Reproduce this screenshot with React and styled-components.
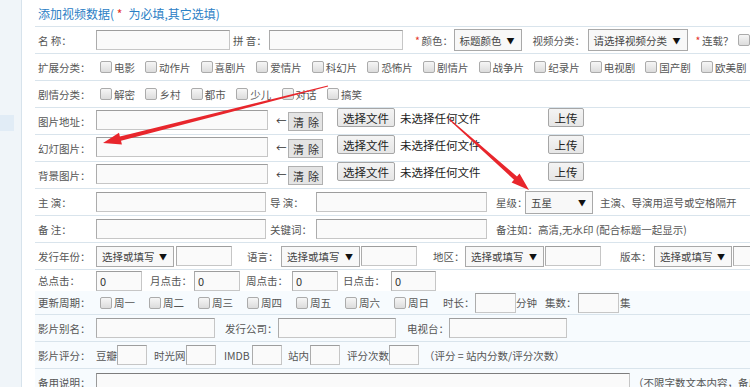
import React from "react";
import styled, { createGlobalStyle } from "styled-components";

const GlobalStyle = createGlobalStyle`
  html, body {
    margin: 0;
    padding: 0;
    background: #fff;
  }
  body {
    width: 750px;
    height: 387px;
    overflow: hidden;
    font-family: "Noto Sans CJK SC", "Noto Sans", sans-serif;
    font-size: 10.5px;
    color: #555;
  }
  * {
    box-sizing: border-box;
  }
`;

const Page = styled.div`
  position: relative;
  display: flex;
  width: 750px;
  height: 387px;
  overflow: hidden;
`;

const Sidebar = styled.aside`
  width: 22px;
  flex-shrink: 0;
  background: #f0f5f9;
  border-right: 1px solid #d7e3ec;
  padding-top: 115px;
`;

const MenuMark = styled.div`
  width: 14px;
  height: 16px;
  background: #e1ecf6;
`;

const Gutter = styled.div`
  width: 13px;
  flex-shrink: 0;
`;

const Form = styled.main`
  flex: 1;
  display: flex;
  flex-direction: column;
  min-width: 0;
`;

const Row = styled.div`
  display: flex;
  align-items: ${(p) => p.$align || "center"};
  height: ${(p) => p.$h || 27}px;
  flex-shrink: 0;
  padding-left: 3px;
  border-bottom: ${(p) => (p.$noLine ? "none" : "1px solid #d9e4ec")};
  background: ${(p) => (p.$tint ? "#f7fbfe" : "#fff")};
  white-space: nowrap;
`;

const Title = styled.h1`
  margin: 0;
  font-size: 12px;
  font-weight: normal;
  color: #2b80c5;
`;

const Star = styled.span`
  color: #e5332a;
  display: inline-block;
  width: ${(p) => p.$w || 9}px;
  margin-left: ${(p) => p.$ml || 0}px;
`;

const Label = styled.label`
  width: 58px;
  flex-shrink: 0;
  align-self: center;
  color: #555;
`;

const Text = styled.span`
  display: inline-block;
  flex-shrink: 0;
  margin-left: ${(p) => p.$ml || 0}px;
  width: ${(p) => (p.$w ? `${p.$w}px` : "auto")};
  align-self: ${(p) => p.$self || "auto"};
  margin-top: ${(p) => p.$mt || 0}px;
  color: ${(p) => p.$color || "#555"};
  font-size: ${(p) => p.$fs || 10.5}px;
`;

const Input = styled.input`
  flex-shrink: 0;
  width: ${(p) => p.$w}px;
  height: ${(p) => p.$h || 20}px;
  margin: ${(p) => p.$mt || 0}px 0 0 ${(p) => p.$ml || 0}px;
  padding: 0 3px;
  border: 1px solid #c6c6c6;
  border-top-color: #9d9d9d;
  border-left-color: #acacac;
  background: #fafafa;
  font-family: inherit;
  font-size: 11px;
  color: #333;
  outline: none;
`;

const TextArea = styled.textarea`
  flex-shrink: 0;
  width: ${(p) => p.$w}px;
  height: 40px;
  margin: ${(p) => p.$mt || 0}px 0 0 0;
  border: 1px solid #c6c6c6;
  border-top-color: #7d7d7d;
  border-left-color: #9a9a9a;
  background: #fafafa;
  resize: none;
`;

const Select = styled.div`
  flex-shrink: 0;
  display: flex;
  align-items: center;
  justify-content: space-between;
  width: ${(p) => p.$w}px;
  height: ${(p) => p.$h || 21}px;
  margin-left: ${(p) => p.$ml || 0}px;
  padding: 0 6px 0 5px;
  border: 1px solid #a9a9a9;
  background: #f8f8f8;
  color: #444;
  font-size: 10.5px;
`;

const Caret = styled.span`
  margin-left: 4px;
  font-size: 8px;
  color: #111;
`;

const CheckGroup = styled.div`
  display: flex;
  align-items: center;
  padding-left: 4px;
`;

const CheckItem = styled.span`
  display: inline-flex;
  align-items: center;
  flex-shrink: 0;
  width: ${(p) => (p.$w ? `${p.$w}px` : "auto")};
  gap: 2px;
`;

const Box = styled.span`
  display: inline-block;
  width: 12px;
  height: 12px;
  flex-shrink: 0;
  border: 1px solid #ababab;
  border-radius: 2px;
  background: linear-gradient(#f6f6f6, #dcdcdc);
`;

const ClearButton = styled.button`
  flex-shrink: 0;
  width: 35px;
  height: 19px;
  margin-top: ${(p) => p.$mt || 0}px;
  padding: 0;
  border: 1px solid #b0b0b0;
  background: #e4e4e4;
  font-family: inherit;
  font-size: 11px;
  letter-spacing: 4px;
  text-indent: 4px;
  color: #333;
`;

const FileButton = styled.button`
  flex-shrink: 0;
  width: ${(p) => p.$w}px;
  height: 19px;
  margin-left: ${(p) => p.$ml || 0}px;
  padding: 0;
  border: 1px solid #a6a6a6;
  border-radius: 2px;
  background: linear-gradient(#f4f4f4, #e6e6e6);
  font-family: inherit;
  font-size: 11.5px;
  color: #222;
`;

const FileBox = styled.div`
  display: flex;
  align-items: center;
  height: 19px;
  flex-shrink: 0;
`;

const Overlay = styled.svg`
  position: absolute;
  left: 0;
  top: 0;
  width: 750px;
  height: 387px;
  pointer-events: none;
`;

function arrowPoints([x1, y1], [x2, y2], tail = 1, shaft = 4.5, headLen = 18, headW = 12) {
  const dx = x2 - x1;
  const dy = y2 - y1;
  const len = Math.hypot(dx, dy);
  const ux = dx / len;
  const uy = dy / len;
  const nx = -uy;
  const ny = ux;
  const bx = x2 - ux * headLen;
  const by = y2 - uy * headLen;
  const pts = [
    [x1 + (nx * tail) / 2, y1 + (ny * tail) / 2],
    [bx + (nx * shaft) / 2, by + (ny * shaft) / 2],
    [bx + (nx * headW) / 2, by + (ny * headW) / 2],
    [x2, y2],
    [bx - (nx * headW) / 2, by - (ny * headW) / 2],
    [bx - (nx * shaft) / 2, by - (ny * shaft) / 2],
    [x1 - (nx * tail) / 2, y1 - (ny * tail) / 2],
  ];
  return pts.map((p) => p.map((v) => v.toFixed(1)).join(",")).join(" ");
}

const extTypes = ["电影", "动作片", "喜剧片", "爱情片", "科幻片", "恐怖片", "剧情片", "战争片", "纪录片", "电视剧", "国产剧", "欧美剧"];
const plotTypes = ["解密", "乡村", "都市", "少儿", "对话", "搞笑"];
const weekDays = ["周一", "周二", "周三", "周四", "周五", "周六", "周日"];

function Checks({ items, w }) {
  return (
    <CheckGroup>
      {items.map((t) => (
        <CheckItem key={t} $w={w ? w : t.length > 2 ? 55.6 : 45}>
          <Box />
          {t}
        </CheckItem>
      ))}
    </CheckGroup>
  );
}

function PicRow({ label }) {
  return (
    <Row $align="flex-start">
      <Label>{label}</Label>
      <Input $w={172} $mt={2} />
      <Text $ml={8} $w={12} $mt={5} $color="#333">←</Text>
      <ClearButton $mt={4}>清除</ClearButton>
      <FileBox>
        <FileButton $w={58} $ml={14}>选择文件</FileButton>
        <Text $ml={5} $w={148} $fs={11.5} $color="#222">未选择任何文件</Text>
        <FileButton $w={36}>上传</FileButton>
      </FileBox>
    </Row>
  );
}

function DropSelect({ w, ml, h, children }) {
  return (
    <Select $w={w} $ml={ml} $h={h}>
      <span>{children}</span>
      <Caret>▼</Caret>
    </Select>
  );
}

export default function App() {
  return (
    <>
      <GlobalStyle />
      <Page>
        <Sidebar>
          <MenuMark />
        </Sidebar>
        <Gutter />
        <Form>
          <Row>
            <Title>
              添加视频数据( <Star>*</Star> 为必填,其它选填)
            </Title>
          </Row>

          <Row>
            <Label>名 称：</Label>
            <Input $w={134} />
            <Text $ml={3} $w={36}>拼 音：</Text>
            <Input $w={134} />
            <Star $ml={12}>*</Star>
            <Text $w={32}>颜色：</Text>
            <DropSelect w={68} h={22}>标题颜色</DropSelect>
            <Text $ml={11} $w={55}>视频分类：</Text>
            <DropSelect w={100} h={22}>请选择视频分类</DropSelect>
            <Star $ml={8}>*</Star>
            <Text $w={36}>连载？</Text>
            <Box />
          </Row>

          <Row>
            <Label>扩展分类：</Label>
            <Checks items={extTypes} />
          </Row>

          <Row>
            <Label>剧情分类：</Label>
            <Checks items={plotTypes} w={45.4} />
          </Row>

          <PicRow label="图片地址：" />
          <PicRow label="幻灯图片：" />
          <PicRow label="背景图片：" />

          <Row>
            <Label>主 演：</Label>
            <Input $w={170} />
            <Text $ml={4} $w={46}>导 演：</Text>
            <Input $w={171} />
            <Text $ml={9} $w={29}>星级：</Text>
            <DropSelect w={68} h={23}>五星</DropSelect>
            <Text $ml={7}>主演、导演用逗号或空格隔开</Text>
          </Row>

          <Row>
            <Label>备 注：</Label>
            <Input $w={170} />
            <Text $ml={4} $w={46}>关键词：</Text>
            <Input $w={171} />
            <Text $ml={9}>备注如：高清,无水印 (配合标题一起显示)</Text>
          </Row>

          <Row>
            <Label>发行年份：</Label>
            <DropSelect w={78}>选择或填写</DropSelect>
            <Input $w={56} $ml={2} />
            <Text $ml={15} $w={34}>语言：</Text>
            <DropSelect w={79}>选择或填写</DropSelect>
            <Input $w={56} $ml={1} />
            <Text $ml={16} $w={32}>地区：</Text>
            <DropSelect w={79}>选择或填写</DropSelect>
            <Input $w={56} $ml={1} />
            <Text $ml={19} $w={34}>版本：</Text>
            <DropSelect w={78}>选择或填写</DropSelect>
            <Input $w={56} $ml={1} />
          </Row>

          <Row $h={21} $noLine>
            <Label>总点击：</Label>
            <Input $w={46} defaultValue="0" />
            <Text $ml={8} $w={44}>月点击：</Text>
            <Input $w={46} defaultValue="0" />
            <Text $ml={6} $w={46}>周点击：</Text>
            <Input $w={46} defaultValue="0" />
            <Text $ml={5} $w={48}>日点击：</Text>
            <Input $w={45} defaultValue="0" />
          </Row>

          <Row $h={24} $tint>
            <Label>更新周期：</Label>
            <Checks items={weekDays} w={49} />
            <Text $w={32}>时长：</Text>
            <Input $w={41} />
            <Text $w={21}>分钟</Text>
            <Text $ml={8} $w={33}>集数：</Text>
            <Input $w={41} />
            <Text $ml={1}>集</Text>
          </Row>

          <Row $tint>
            <Label>影片别名：</Label>
            <Input $w={119} />
            <Text $ml={10} $w={53}>发行公司：</Text>
            <Input $w={118} />
            <Text $ml={11} $w={42}>电视台：</Text>
            <Input $w={118} />
          </Row>

          <Row $tint>
            <Label>影片评分：</Label>
            <Text $w={21}>豆瓣</Text>
            <Input $w={30} />
            <Text $ml={7} $w={32}>时光网</Text>
            <Input $w={30} />
            <Text $ml={8} $w={28}>IMDB</Text>
            <Input $w={30} />
            <Text $ml={6} $w={22}>站内</Text>
            <Input $w={30} />
            <Text $ml={7} $w={42}>评分次数</Text>
            <Input $w={30} />
            <Text $ml={5}>（评分 = 站内分数/评分次数）</Text>
          </Row>

          <Row $tint $align="flex-start">
            <Label>备用说明：</Label>
            <TextArea $w={534} $mt={4} />
            <Text $ml={3} $self="center">（不限字数文本内容，备用说明）</Text>
          </Row>
        </Form>

        <Overlay viewBox="0 0 750 387">
          <polygon points={arrowPoints([328, 86], [103, 143])} fill="#e8262c" />
          <polygon points={arrowPoints([449, 119], [529, 190])} fill="#e8262c" />
        </Overlay>
      </Page>
    </>
  );
}
